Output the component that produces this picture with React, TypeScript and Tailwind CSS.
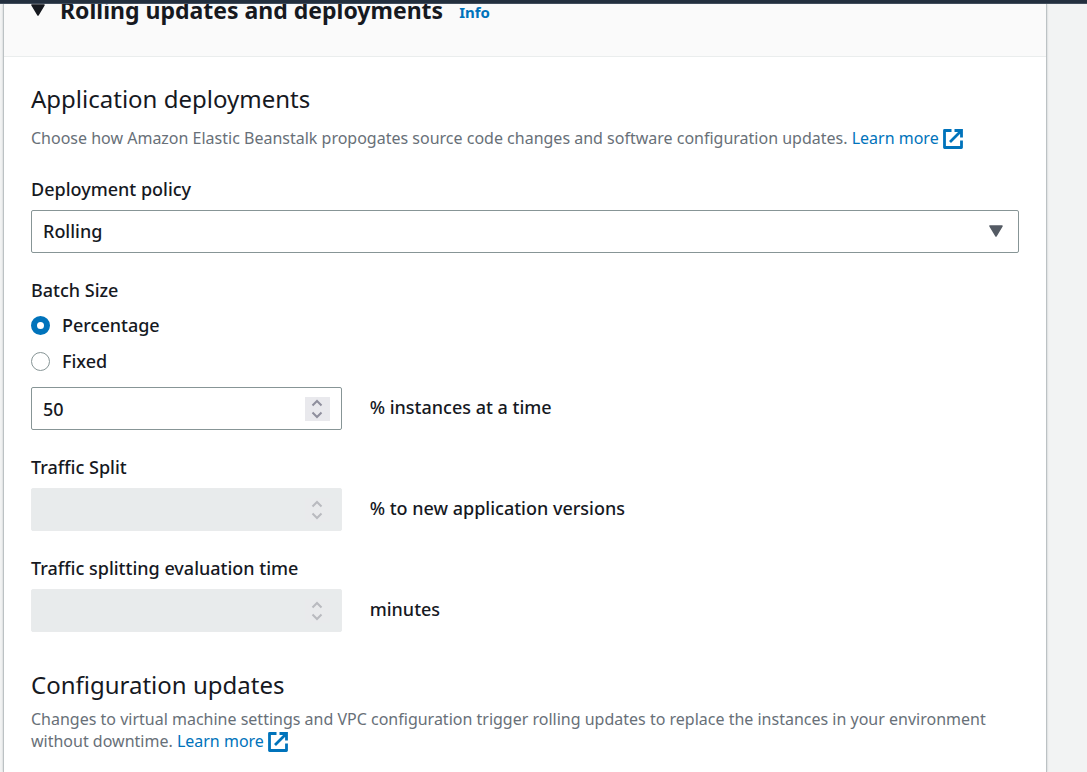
import { useState } from 'react';
import type { ReactNode } from 'react';

function ExternalIcon() {
  return (
    <svg
      viewBox="0 0 20 20"
      className="ml-1 inline-block size-5 align-text-bottom"
      fill="none"
      stroke="currentColor"
      strokeWidth="2.8"
      strokeLinejoin="round"
      aria-hidden="true"
    >
      <path d="M8.5 1.5H1.5v17h17v-7" />
      <path d="M11.5 1.5h7v7M18 2L7 13" strokeLinejoin="miter" />
    </svg>
  );
}

function LearnMore() {
  return (
    <a href="#learn-more" className="whitespace-nowrap text-[#0073bb]">
      Learn more
      <ExternalIcon />
    </a>
  );
}

function Caret({ className }: { className: string }) {
  return (
    <svg viewBox="0 0 14 12" className={className} aria-hidden="true">
      <path
        d="M1 1h12L7 11z"
        fill="currentColor"
        stroke="currentColor"
        strokeWidth="1.5"
        strokeLinejoin="round"
      />
    </svg>
  );
}

interface StepButtonProps {
  label: string;
  path: string;
  disabled?: boolean;
  onClick: () => void;
}

function StepButton({ label, path, disabled, onClick }: StepButtonProps) {
  return (
    <button
      type="button"
      aria-label={label}
      disabled={disabled}
      onClick={onClick}
      className="flex h-3 items-center justify-center"
    >
      <svg viewBox="0 0 12 8" className="h-2 w-3" fill="none" stroke="currentColor" strokeWidth="2">
        <path d={path} />
      </svg>
    </button>
  );
}

interface NumberFieldProps {
  id: string;
  label: string;
  value: string;
  suffix: string;
  disabled?: boolean;
  hideLabel?: boolean;
  onChange?: (value: string) => void;
}

function NumberField({ id, label, value, suffix, disabled, hideLabel, onChange }: NumberFieldProps) {
  const step = (delta: number) => onChange?.(String(Number(value) + delta));
  return (
    <div>
      {!hideLabel && (
        <label htmlFor={id} className="mb-2.5 block leading-[22px]">
          {label}
        </label>
      )}
      <div className="grid grid-cols-3 items-center gap-7">
        <div className="relative">
          <input
            id={id}
            type="number"
            aria-label={hideLabel ? label : undefined}
            value={value}
            disabled={disabled}
            onChange={(e) => onChange?.(e.target.value)}
            className="block h-[43px] w-full appearance-none rounded-xs border border-[#879596] bg-white pr-10 pl-[11px] [-moz-appearance:textfield] disabled:border-[#e9ebec] disabled:bg-[#e8ebec] [&::-webkit-inner-spin-button]:appearance-none"
          />
          <div
            className={
              disabled
                ? 'absolute top-2.5 right-3 flex h-6 w-[25px] flex-col bg-[#e9eaec] text-[#b9babf]'
                : 'absolute top-2.5 right-3 flex h-6 w-[25px] flex-col bg-[#e9e9ed] text-[#8f8f9d]'
            }
          >
            <StepButton
              label={`Increase ${label}`}
              path="M1.5 6.5L6 2l4.5 4.5"
              disabled={disabled}
              onClick={() => step(1)}
            />
            <StepButton
              label={`Decrease ${label}`}
              path="M1.5 1.5L6 6l4.5-4.5"
              disabled={disabled}
              onClick={() => step(-1)}
            />
          </div>
        </div>
        <span className="col-span-2 pb-1 leading-[22px]">{suffix}</span>
      </div>
    </div>
  );
}

interface RadioProps {
  label: string;
  checked: boolean;
  onSelect: () => void;
}

function Radio({ label, checked, onSelect }: RadioProps) {
  return (
    <label className="flex items-center gap-3 leading-[22px]">
      <input
        type="radio"
        name="batch-size"
        checked={checked}
        onChange={onSelect}
        className="size-[19px] shrink-0 appearance-none rounded-full border border-[#879596] bg-white checked:border-6 checked:border-[#0073bb]"
      />
      {label}
    </label>
  );
}

function SectionTitle({ children }: { children: ReactNode }) {
  return <h3 className="text-2xl leading-[30px]">{children}</h3>;
}

export default function App() {
  const [policy, setPolicy] = useState('Rolling');
  const [unit, setUnit] = useState('Percentage');
  const [size, setSize] = useState('50');

  return (
    <div className="min-h-screen overflow-hidden bg-[#f2f3f3] font-['Noto_Sans',sans-serif] text-lg text-[#16191f]">
      <div className="sticky top-0 z-10 h-1 border-b border-[#414d5c] bg-[#232f3e]" />
      <main className="mr-10 ml-[3px] flex min-h-[calc(100vh-4px)] flex-col border-x border-[#bcc2c4] bg-white shadow-[0_0_2px_rgba(0,28,36,0.2)]">
        <header className="flex h-[53px] items-start border-b border-[#eaeded] bg-[#fafafa] px-[27px]">
          <div className="-mt-[9px] flex items-center">
            <button type="button" aria-label="Toggle section" className="mr-[15px] text-[#16191f]">
              <Caret className="h-3 w-3.5" />
            </button>
            <h2 className="text-[23px] leading-[30px] font-bold">Rolling updates and deployments</h2>
            <a href="#info" className="mt-1 ml-4 text-[15px] leading-[22px] font-bold text-[#0073bb]">
              Info
            </a>
          </div>
        </header>

        <form className="px-[27px] pt-[27px]" onSubmit={(e) => e.preventDefault()}>
          <SectionTitle>Application deployments</SectionTitle>
          <p className="mt-[13px] text-base leading-[22px] text-[#687078]">
            Choose how Amazon Elastic Beanstalk propogates source code changes and software configuration updates.{' '}
            <LearnMore />
          </p>

          <div className="mt-[29px] flex flex-col gap-[26px] font-medium">
            <div>
              <label htmlFor="policy" className="mb-2.5 block leading-[22px]">
                Deployment policy
              </label>
              <div className="relative">
                <select
                  id="policy"
                  value={policy}
                  onChange={(e) => setPolicy(e.target.value)}
                  className="block h-[43px] w-full appearance-none rounded-xs border border-[#879596] bg-white pr-10 pb-0.5 pl-[11px]"
                >
                  <option>Rolling</option>
                  <option>All at once</option>
                  <option>Immutable</option>
                </select>
                <Caret className="pointer-events-none absolute top-[15px] right-4 h-3 w-3.5 text-[#545b64]" />
              </div>
            </div>

            <div>
              <fieldset className="mb-[15px]">
                <legend className="mb-[13px] leading-[22px]">Batch Size</legend>
                <div className="flex flex-col gap-3.5">
                  <Radio label="Percentage" checked={unit === 'Percentage'} onSelect={() => setUnit('Percentage')} />
                  <Radio label="Fixed" checked={unit === 'Fixed'} onSelect={() => setUnit('Fixed')} />
                </div>
              </fieldset>
              <NumberField
                id="size"
                label="Batch size value"
                hideLabel
                value={size}
                onChange={setSize}
                suffix="% instances at a time"
              />
            </div>

            <NumberField id="split" label="Traffic Split" value="" disabled suffix="% to new application versions" />
            <NumberField
              id="evaluation"
              label="Traffic splitting evaluation time"
              value=""
              disabled
              suffix="minutes"
            />
          </div>

          <div className="mt-[38px]">
            <SectionTitle>Configuration updates</SectionTitle>
            <p className="mt-2 text-base leading-[22px] text-[#687078]">
              Changes to virtual machine settings and VPC configuration trigger rolling updates to replace the instances
              in your environment without downtime. <LearnMore />
            </p>
          </div>
        </form>
      </main>
    </div>
  );
}
